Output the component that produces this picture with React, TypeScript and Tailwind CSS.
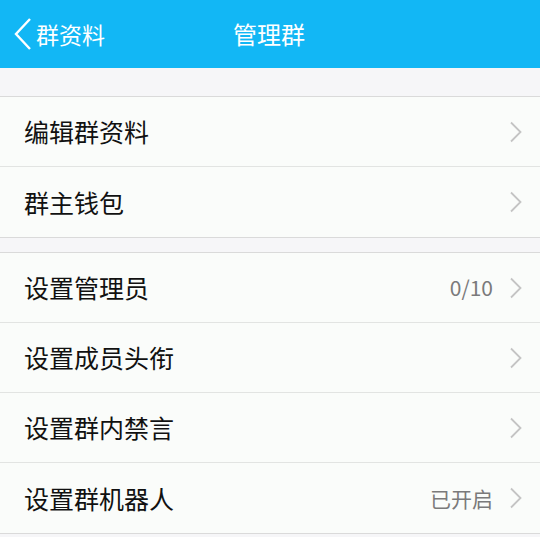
import React from "react";

const Chevron = () => (
  <svg width="14" height="22" viewBox="0 0 14 22" className="shrink-0">
    <path d="M2 1.5 L11.5 11 L2 20.5" fill="none" stroke="#c4c4c4" strokeWidth="1.8" />
  </svg>
);

const Row = ({ label, value, last }: { label: string; value?: string; last?: boolean }) => (
  <div className={`h-[70px] flex items-center pl-[24px] pr-[17px] bg-[#fafcfa] ${last ? "h-[69px]" : "border-b border-[#e2e4e2]"}`}>
    <span className="flex-1 text-[25px] text-[#111] leading-none">{label}</span>
    {value && <span className="text-[21px] text-[#7a7a7a] mr-[16px] leading-none">{value}</span>}
    <Chevron />
  </div>
);

export default function App() {
  return (
    <div
      className="w-[540px] h-[537px] overflow-hidden bg-[#f6f6f8]"
      style={{ fontFamily: '"Noto Sans CJK SC", "Noto Sans", sans-serif' }}
    >
      <div className="h-[68px] bg-[#12b7f5] relative flex items-center">
        <div className="flex items-center pl-[13px]">
          <svg width="20" height="34" viewBox="0 0 20 34">
            <path d="M17 2 L3 17 L17 32" fill="none" stroke="#fff" strokeWidth="2.4" />
          </svg>
          <span className="ml-[3px] text-[23px] text-white leading-none">群资料</span>
        </div>
        <span className="absolute left-[233px] text-[24px] text-white leading-none">管理群</span>
      </div>
      <div className="h-[28px]" />
      <div className="border-t border-b border-[#dadada] flex flex-col">
        <Row label="编辑群资料" />
        <Row label="群主钱包" last />
      </div>
      <div className="h-[14px]" />
      <div className="border-t border-b border-[#dadada] flex flex-col">
        <Row label="设置管理员" value="0/10" />
        <Row label="设置成员头衔" />
        <Row label="设置群内禁言" />
        <Row label="设置群机器人" value="已开启" last />
      </div>
    </div>
  );
}
